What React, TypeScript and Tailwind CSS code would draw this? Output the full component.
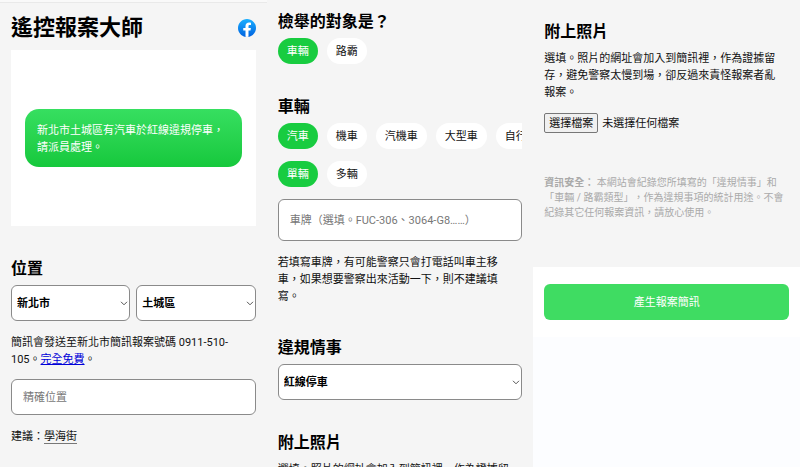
import { useRef, useState } from 'react';
import type { ReactNode } from 'react';

const TARGETS = ['車輛', '路霸'];
const VEHICLES = ['汽車', '機車', '汽機車', '大型車', '自行車'];
const AMOUNTS = ['單輛', '多輛'];

function FacebookIcon() {
  return (
    <svg viewBox="0 0 36 36" className="block h-[18px] w-[18px]" aria-hidden="true">
      <defs>
        <linearGradient id="fb" x1="50%" y1="0%" x2="50%" y2="100%">
          <stop offset="0%" stopColor="#19AFFF" />
          <stop offset="100%" stopColor="#0062E0" />
        </linearGradient>
      </defs>
      <path fill="url(#fb)" d="M15 35.8C6.5 34.3 0 26.9 0 18 0 8.1 8.1 0 18 0s18 8.1 18 18c0 8.9-6.5 16.3-15 17.8l-1-.8h-4l-1 .8z" />
      <path fill="#fff" d="M25 23l.8-5H21v-3.500c0-1.400.5-2.500 2.700-2.500H26V7.400c-1.300-.2-2.700-.4-4-.4-4.100 0-7 2.500-7 7v4h-4.500v5H15v12.700c1 .2 2 .3 3 .3s2-.1 3-.3V23h4z" />
    </svg>
  );
}

function Heading({ children }: { children: ReactNode }) {
  return <h2 className="mb-1.5 text-[16px] leading-5 font-bold text-black">{children}</h2>;
}

interface ChipsProps {
  label: string;
  options: string[];
}

function Chips({ label, options }: ChipsProps) {
  const [selected, setSelected] = useState(options[0]);

  return (
    <div className="flex gap-[9px] overflow-hidden" role="group" aria-label={label}>
      {options.map((o) => (
        <button
          key={o}
          type="button"
          aria-pressed={o === selected}
          onClick={() => setSelected(o)}
          className={`h-[26px] shrink-0 rounded-full px-[9px] leading-[17px] ${
            o === selected ? 'bg-[#18cc40] text-white' : 'bg-white'
          }`}
        >
          {o}
        </button>
      ))}
    </div>
  );
}

function Select({ label, options }: ChipsProps) {
  return (
    <div className="relative flex-1">
      <select
        aria-label={label}
        className="block h-9 w-full appearance-none rounded-md border border-[#8a8a8a] bg-white pr-4 pl-[5px] font-bold text-black"
      >
        {options.map((o) => (
          <option key={o}>{o}</option>
        ))}
      </select>
      <svg viewBox="0 0 8 5" className="pointer-events-none absolute top-4 right-[2px] h-[5px] w-2" aria-hidden="true">
        <path d="M1 .8l3 3 3-3" fill="none" stroke="#555" strokeWidth="1" />
      </svg>
    </div>
  );
}

function PhotoIntro() {
  return (
    <>
      <Heading>附上照片</Heading>
      <p className="mt-2 pr-2">選填。照片的網址會加入到簡訊裡，作為證據留存，避免警察太慢到場，卻反過來責怪報案者亂報案。</p>
    </>
  );
}

function LocationPanel() {
  return (
    <section>
      <div className="h-[3px] border-b border-[#e9e9e9] bg-[#f9f9f9]"></div>
      <div className="px-[11px] pt-[11px]">
        <header className="mb-2 flex items-center justify-between">
          <h1 className="text-[22px] leading-7 font-bold text-black">遙控報案大師</h1>
          <a href="#facebook" aria-label="Facebook">
            <FacebookIcon />
          </a>
        </header>

        {/* 簡訊預覽 */}
        <div className="mb-[33px] flex h-44 items-center bg-white px-[14px]">
          <p className="w-full rounded-[14px] bg-linear-to-b from-[#36df60] to-[#15c83c] px-3 pt-[13px] pb-[11px] text-white">
            新北市土城區有汽車於紅線違規停車，請派員處理。
          </p>
        </div>

        <Heading>位置</Heading>
        <div className="flex gap-1.5">
          <Select label="縣市" options={['新北市']} />
          <Select label="行政區" options={['土城區']} />
        </div>
        <p className="mt-[13px] mb-[11px]">
          簡訊會發送至新北市簡訊報案號碼 0911-510-105。
          <a href="#free" className="text-[#0000d8] underline">完全免費</a>。
        </p>
        <input
          type="text"
          aria-label="精確位置"
          placeholder="精確位置"
          className="block h-9 w-full rounded-md border border-[#8a8a8a] bg-white px-[11px] placeholder:text-[#777]"
        />
        <p className="mt-[13px]">
          建議：<a href="#street" className="border-b border-[#777]">學海街</a>
        </p>
      </div>
    </section>
  );
}

function VehiclePanel() {
  return (
    <section className="px-[11px] pt-3">
      <Heading>檢舉的對象是？</Heading>
      <Chips label="檢舉的對象" options={TARGETS} />

      <div className="my-[33px]">
        <Heading>車輛</Heading>
        <div className="flex flex-col gap-3">
          <Chips label="車種" options={VEHICLES} />
          <Chips label="數量" options={AMOUNTS} />
          <input
            type="text"
            aria-label="車牌"
            placeholder="車牌（選填。FUC-306、3064-G8……）"
            className="block h-[42px] w-full rounded-md border border-[#8a8a8a] bg-white px-[11px] placeholder:text-[#777]"
          />
        </div>
        <p className="mt-[13px] pr-2">若填寫車牌，有可能警察只會打電話叫車主移車，如果想要警察出來活動一下，則不建議填寫。</p>
      </div>

      <Heading>違規情事</Heading>
      <div className="mb-[33px] flex">
        <Select label="違規情事" options={['紅線停車']} />
      </div>

      <PhotoIntro />
    </section>
  );
}

function PhotoPanel() {
  const fileInput = useRef<HTMLInputElement>(null);
  const [fileName, setFileName] = useState('');

  return (
    <section className="flex flex-col bg-[#fcfdff]">
      <div className="bg-[#f5f5f5] px-[11px] pt-[22px] pb-[47px]">
        <PhotoIntro />
        <div className="mt-3 flex items-center gap-1">
          <input
            ref={fileInput}
            type="file"
            aria-label="選擇檔案"
            className="hidden"
            onChange={(e) => setFileName(e.target.files?.[0]?.name ?? '')}
          />
          <button
            type="button"
            onClick={() => fileInput.current?.click()}
            className="h-5 rounded-xs border border-[#777] bg-[#f0f0f0] px-1"
          >
            選擇檔案
          </button>
          <span>{fileName || '未選擇任何檔案'}</span>
        </div>
        <p className="mt-[42px] text-[10px] leading-[15px] text-[#aaa]">
          <strong>資訊安全：</strong> 本網站會紀錄您所填寫的「違規情事」和「車輛 / 路霸類型」，作為違規事項的統計用途。不會紀錄其它任何報案資訊，請放心使用。
        </p>
      </div>
      <div className="bg-white px-[11px] py-[17px]">
        <button type="button" className="h-9 w-full rounded-md bg-[#3fdc62] text-white">
          產生報案簡訊
        </button>
      </div>
    </section>
  );
}

export default function App() {
  return (
    <main
      lang="zh-Hant"
      className="grid h-screen grid-cols-3 overflow-hidden bg-[#f5f5f5] font-[Roboto,'Noto_Sans_CJK_TC',sans-serif] text-[11px] leading-[17px] text-[#111] [text-spacing-trim:space-all]"
    >
      <LocationPanel />
      <VehiclePanel />
      <PhotoPanel />
    </main>
  );
}
